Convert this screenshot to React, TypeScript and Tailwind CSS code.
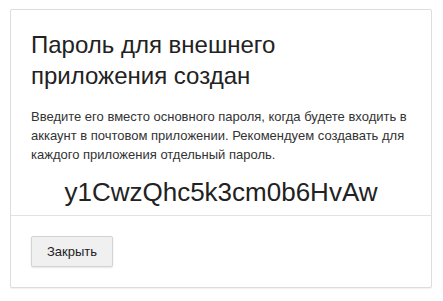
export default function App() {
  return (
    <div className="min-h-screen bg-white px-[10px] pt-[9px] font-['Liberation_Sans',Arial,sans-serif] text-[#333]">
      <div className="w-[422px] rounded-[2px] border border-[#ddd] bg-white shadow-[0_1px_1px_rgba(0,0,0,0.06)]">
        <div className="px-5 pt-[19px] pb-[7px]">
          <h2 className="text-[24px] leading-[31px] font-normal text-[#222]">
            Пароль для внешнего
            <br />
            приложения создан
          </h2>
          <p className="mt-[16px] text-[13px] leading-[19px]">
            Введите его вместо основного пароля, когда будете входить в
            аккаунт в почтовом приложении. Рекомендуем создавать для каждого
            приложения отдельный пароль.
          </p>
          <div className="mt-[13px] text-center text-[26px] leading-[31px] text-[#222]">
            y1CwzQhc5k3cm0b6HvAw
          </div>
        </div>
        <div className="border-t border-[#e2e2e2] p-5">
          <button className="h-[31px] rounded-[2px] border border-[#d3d3d3] bg-[#f0f0f0] px-[15px] text-[13px] text-[#222] shadow-[0_1px_2px_rgba(0,0,0,0.1)]">
            Закрыть
          </button>
        </div>
      </div>
    </div>
  );
}
